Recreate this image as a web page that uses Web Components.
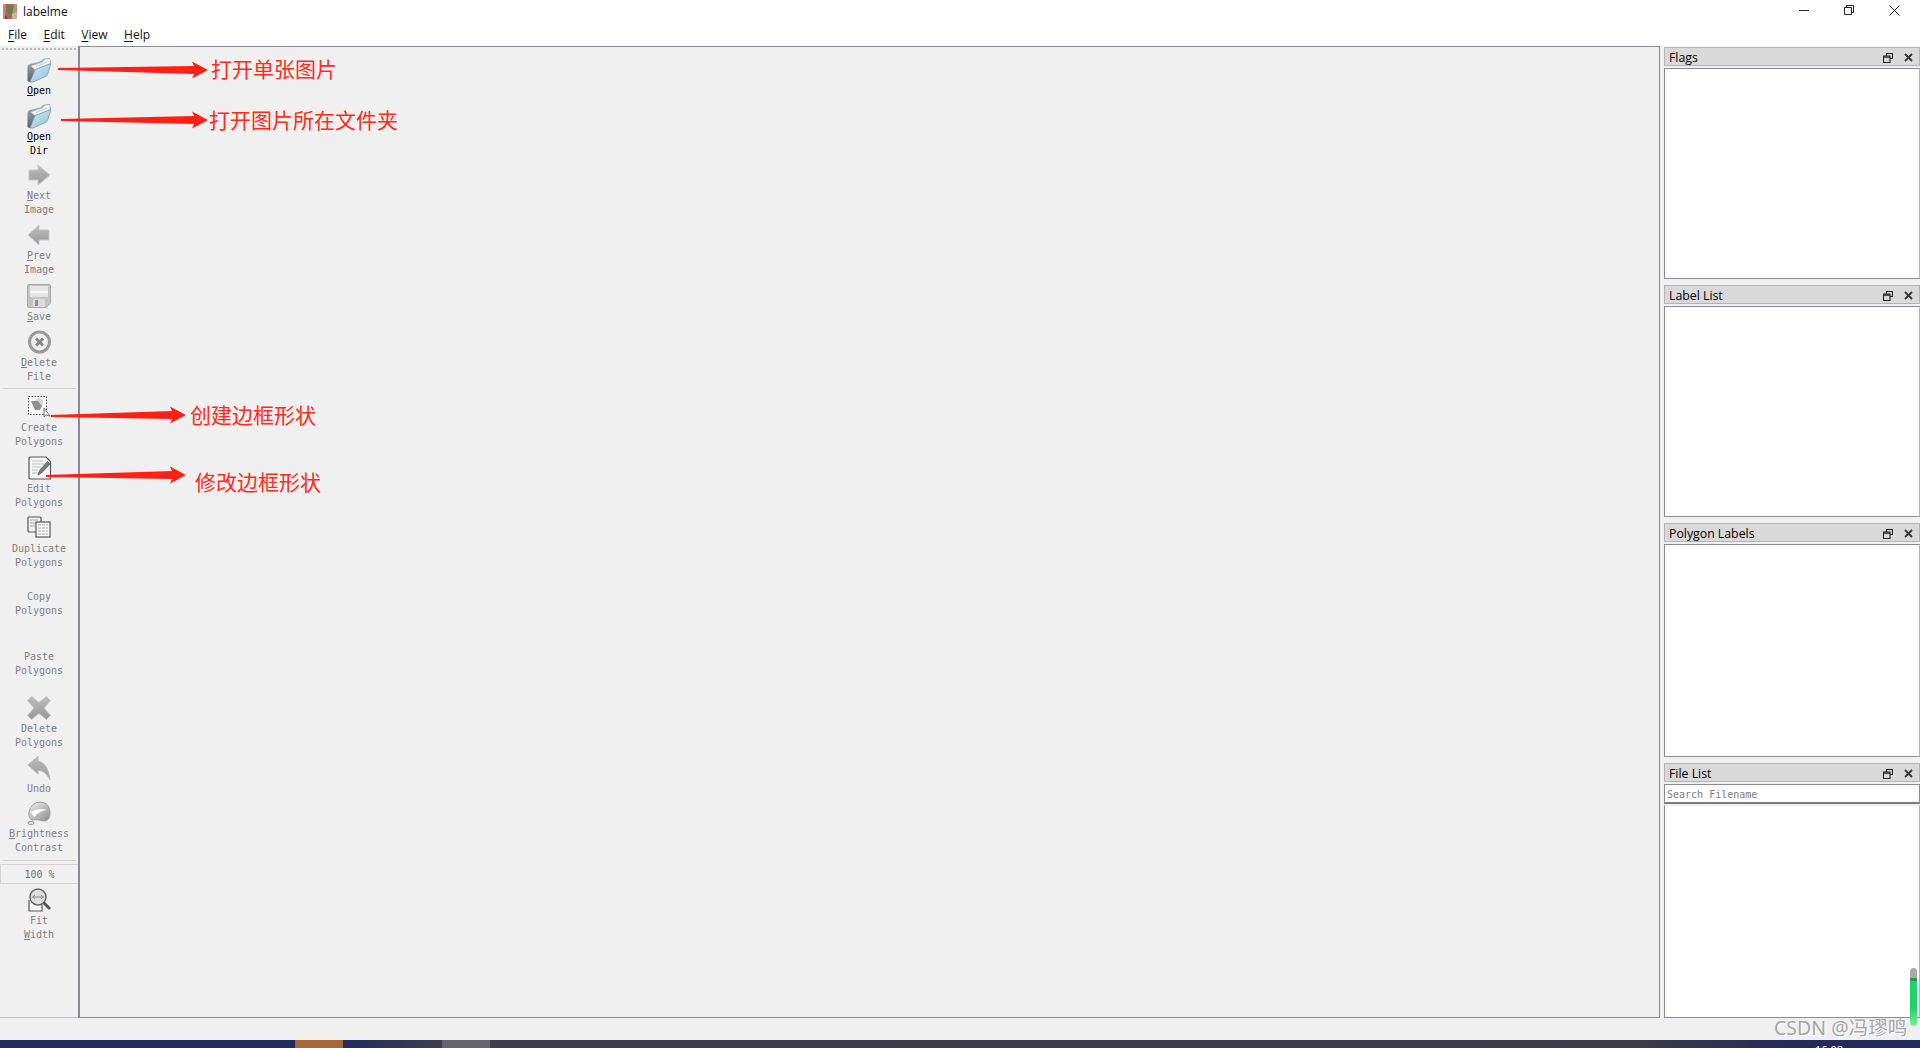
<!DOCTYPE html>
<html lang="zh">
<head>
<meta charset="utf-8">
<title>labelme</title>
<style>
  html, body { margin: 0; height: 100%; overflow: hidden; background: #f0f0f0; }
  body { font-family: "Open Sans", "Noto Sans", sans-serif; }
</style>
</head>
<body>
<app-window></app-window>

<script>
  (function labelmeApp(customElements) {
    // icons are all 24x24 boxes, the disabled ones are greys
    const defs = `
      <defs>
        <linearGradient id="pane" x1="0" y1="0" x2="1" y2="1"><stop offset="0" stop-color="#d6ebf4"/><stop offset="1" stop-color="#8dbfda"/></linearGradient>
        <linearGradient id="back" x1="0" y1="0" x2="0" y2="1"><stop offset="0" stop-color="#a9b4bc"/><stop offset="1" stop-color="#56626c"/></linearGradient>
        <linearGradient id="grey" x1="0" y1="0" x2="0" y2="1"><stop offset="0" stop-color="#bdbdbd"/><stop offset="1" stop-color="#979797"/></linearGradient>
        <linearGradient id="ball" x1="0" y1="0" x2="1" y2="1"><stop offset="0" stop-color="#f2f2f2"/><stop offset="1" stop-color="#8a8a8a"/></linearGradient>
      </defs>`;
    const icons = {
      folder: `<path d="M.5 23 .5 9Q.5 6.500 3 6L11 4 14 3 17 .5 23 0 24 5 21 9 7 24H2Z" fill="url(#back)"/><path d="M4 8 13 5 15.500 4 18 1.500 22.500 1 23 5.500 8 12Z" fill="#f1f4f5"/><path d="M8 6.500 15 4.500M9 8.500 20 4" stroke="#b9c6cf" stroke-width=".8"/><path d="M3 24 7.500 13Q8 11.500 9.500 11L24 5.500 20.500 16.500Q20 18 18.500 18.500L6 24Z" fill="url(#pane)" stroke="#7b9bb0" stroke-width=".8"/>`,
      next: `<path d="M2 7H11V2L23 12 11 22V17H2Z" fill="url(#grey)" stroke="#c9c9c9"/>`,
      prev: `<path d="M22 7H12V2L1 12 12 22V17H22Z" fill="url(#grey)" stroke="#c9c9c9"/>`,
      save: `<path d="M2 .5H22Q23.500 .5 23.500 2V19L19 23.500H2Q.5 23.500 .5 22V2Q.5 .5 2 .5Z" fill="#c4c4c4" stroke="#a8a8a8"/><rect x="3" y="2" width="18" height="11" fill="#e6e6e6"/><rect x="3" y="7" width="18" height="2" fill="#f8f8f8"/><rect x="6" y="15" width="12" height="8" fill="#dcdcdc"/><rect x="8" y="16" width="3" height="6" fill="#8f8f8f"/>`,
      deleteFile: `<circle cx="12.500" cy="12" r="10" fill="#eeeeee" stroke="#9a9a9a" stroke-width="3"/><path d="M9 8.500 16 15.500M16 8.500 9 15.500" stroke="#858585" stroke-width="3"/>`,
      create: `<rect x="1.500" y="3.500" width="18" height="18" fill="#fafafa" stroke="#444" stroke-dasharray="1.500 1.500"/><circle cx="12" cy="9.500" r="4" fill="#d5d5d5"/><path d="M4 8H11L15 13 13 17H8Z" fill="#8f8f8f"/><path d="M17 15V24L19 22 23 23Z" fill="#f5f5f5" stroke="#777"/>`,
      edit: `<path d="M3.500 3H19L23.500 7.500V25H3.500Q2 25 2 23.500V4.500Q2 3 3.500 3Z" fill="#f6f6f6" stroke="#555" stroke-width="1.200"/><path d="M5 7H16M5 10H19M5 13H14M5 16H11M5 19H12" stroke="#bdbdbd"/><path d="M11 21 12.500 16.500 20.500 7.500 23 10 15 18.500Z" fill="#7c7c7c" stroke="#444" stroke-width=".6"/>`,
      duplicate: `<rect x="1" y="2" width="13" height="15" rx="1" fill="#f0f0f0" stroke="#555" stroke-width="1.200"/><path d="M3 5H11M3 8H11M3 11H8" stroke="#aaa"/><rect x="9" y="7" width="14" height="15" fill="#fafafa" stroke="#555" stroke-width="1.200"/><path d="M11 10H21M11 13H21M11 16H21M11 19H21" stroke="#aaa" stroke-dasharray="3 1"/>`,
      cross: `<path d="M.5 4.500 4.500 .5 12 6.500 19.500 .5 23.500 4.500 17 12 23.500 19.500 19.500 23.500 12 17.500 4.500 23.500 .5 19.500 7 12Z" fill="url(#grey)" stroke="#c4c4c4" stroke-linejoin="round"/>`,
      undo: `<path d="M1 9 11 .5V5Q21 7 23 24 19 15 11 14V18Z" fill="url(#grey)" stroke="#b8b8b8"/>`,
      brightness: `<path d="M2 11Q4 1 14 1 23 2 23 12 23 20 17 20 10 18 5 19 1 17 2 11Z" fill="url(#ball)" stroke="#a2a2a2"/><path d="M4 11Q12 6 20 9 12 10 7 16Z" fill="#fff"/><ellipse cx="4" cy="22" rx="3" ry="1.700" fill="#ddd" stroke="#999"/>`,
      fit: `<path d="M2 12V23H15V17" fill="#f6f6f6" stroke="#555" stroke-width="1.200"/><circle cx="11" cy="9" r="8" fill="#dedede" stroke="#666" stroke-width="1.500"/><path d="M5.500 9H16.500M5.500 9 8 7M5.500 9 8 11M16.500 9 14 7M16.500 9 14 11" stroke="#8a8a8a" fill="none"/><path d="M16.500 14.500 23 21" stroke="#555" stroke-width="3"/>`
    };

    class ToolItem extends HTMLElement {
      constructor() {
        super();
        const name = this.getAttribute('icon');
        const art = name ? `<svg width="24" height="24" viewBox="0 0 24 24" overflow="visible">${defs}${icons[name]}</svg>` : '';
        this.attachShadow({mode: 'open'}).innerHTML = `
          <style>
            :host {
              display: flex;
              flex-direction: column;
              align-items: center;
              box-sizing: border-box;
              font: 10px/13.5px "DejaVu Sans Mono", monospace;
              color: #7f7f7f;
            }
            :host([on]) { color: #000; }
            .art { height: 24px; flex: none; margin-bottom: var(--gap, 2px); }
            .text { flex: none; white-space: pre; text-align: center; }
            u { text-underline-offset: 2px; }
          </style>
          <div class="art">${art}</div>
          <div class="text"><slot></slot></div>
        `;
      }
    }
    customElements.define('tool-item', ToolItem);

    class ToolBar extends HTMLElement {
      constructor() {
        super();
        this.attachShadow({mode: 'open'}).innerHTML = `
          <style>
            :host { display: block; width: 78px; flex: none; box-sizing: border-box; border-bottom: 1px solid #bdbdbd; }
            .grip { height: 12px; box-sizing: border-box; margin: 0 2px; padding-top: 2px; }
            .grip i { display: block; height: 2px; background: repeating-linear-gradient(90deg, #b9b9b9 0 2px, transparent 2px 4px); }
          </style>
          <div class="grip"><i></i></div>
          <slot></slot>
        `;
      }
    }
    customElements.define('tool-bar', ToolBar);

    class ToolSep extends HTMLElement {
      constructor() {
        super();
        this.attachShadow({mode: 'open'}).innerHTML = `
          <style>:host { display: block; height: 1px; margin: 0 2px 0 3px; background: #d2d2d2; }</style>
        `;
      }
    }
    customElements.define('tool-sep', ToolSep);

    class ZoomBox extends HTMLElement {
      constructor() {
        super();
        this.attachShadow({mode: 'open'}).innerHTML = `
          <style>
            :host {
              display: flex; align-items: center; justify-content: center;
              box-sizing: border-box; height: 20px;
              border: 1px solid #d4d4d4; border-right: 0;
              font: 10px "DejaVu Sans Mono", monospace; color: #6d6d6d;
            }
          </style>
          <slot></slot>
        `;
      }
    }
    customElements.define('zoom-box', ZoomBox);

    class DockPanel extends HTMLElement {
      constructor() {
        super();
        this.attachShadow({mode: 'open'}).innerHTML = `
          <style>
            :host { display: flex; flex-direction: column; box-sizing: border-box; }
            .title {
              display: flex; align-items: center; height: 19px; flex: none; box-sizing: border-box;
              padding: 2px 6px 0 4px; margin-bottom: 2px;
              background: #d9d9d9; border: 1px solid #b4b4b4;
              font-size: 12.300px; color: #000;
            }
            .name { flex: 1; }
            svg { display: block; }
            .body { flex: 1; display: flex; flex-direction: column; min-height: 0; }
          </style>
          <div class="title">
            <span class="name">${this.getAttribute('heading')}</span>
            <svg width="10" height="10" viewBox="0 0 10 10" style="margin-right:11px" fill="none" stroke="#222" stroke-width="1.100"><path d="M3.500 2.500V.5H9.500V5.500H7.500M.5 3H7V9.500H.5ZM.5 4.200H7"/></svg>
            <svg width="9" height="9" viewBox="0 0 9 9" stroke="#333" stroke-width="1.800"><path d="M1 1 8 8M8 1 1 8"/></svg>
          </div>
          <div class="body"><slot></slot></div>
        `;
      }
    }
    customElements.define('dock-panel', DockPanel);

    class DockBody extends HTMLElement {
      constructor() {
        super();
        this.attachShadow({mode: 'open'}).innerHTML = `
          <style>
            :host { display: block; flex: 1; box-sizing: border-box; background: #fff; border: 1px solid #8b8b95; border-right-color: #b5b5bb; }
            :host([soft]) { border-top-color: #e6ebef; }
          </style>
        `;
      }
    }
    customElements.define('dock-body', DockBody);

    class SearchBox extends HTMLElement {
      constructor() {
        super();
        this.attachShadow({mode: 'open'}).innerHTML = `
          <style>
            :host {
              display: flex; align-items: center; flex: none; box-sizing: border-box; height: 20px; padding: 2px 0 0 2px; margin-bottom: 1px;
              background: #fff; border: 1px solid #8b8b95; border-bottom: 2px solid #7a7a7a;
              font: 10px "DejaVu Sans Mono", monospace; color: #7d7d7d;
            }
          </style>
          <slot></slot>
        `;
      }
    }
    customElements.define('search-box', SearchBox);

    class WindowBar extends HTMLElement {
      constructor() {
        super();
        this.attachShadow({mode: 'open'}).innerHTML = `
          <style>
            :host { display: flex; align-items: center; height: 24px; flex: none; background: #fff; font-size: 12px; color: #111; padding-left: 3px; }
            .logo { margin-right: 6px; flex: none; margin-top: -2px; }
            .name { flex: 1; margin-top: -2px; }
            .ctl { display: flex; padding-right: 20px; gap: 35px; margin-top: -4px; }
            svg { display: block; }
          </style>
          <svg class="logo" width="14" height="15" viewBox="0 0 14 15">
            <rect width="14" height="15" fill="#a8615c"/>
            <path d="M0 0H3L2 15H0ZM10 0H14V6L11 15H9Z" fill="#c08e7c"/>
            <path d="M4 8 7 3 11 1 10 6 7 13 6 9Z" fill="#4c9136"/>
            <path d="M9 10 14 8V15H9Z" fill="#d3b19d"/>
            <path d="M2 11 5 15H2Z" fill="#7d3c3a"/>
          </svg>
          <span class="name">labelme</span>
          <div class="ctl">
            <svg width="10" height="10" viewBox="0 0 10 10" stroke="#222"><path d="M0 5.500H10"/></svg>
            <svg width="10" height="10" viewBox="0 0 10 10" fill="none" stroke="#222"><path d="M2.500 2.500V.5H9.500V7.500H7.500M.5 2.500H7.500V9.500H.5Z"/></svg>
            <svg width="11" height="11" viewBox="0 0 11 11" stroke="#222"><path d="M.5 .5 10.500 10.500M10.500 .5 .5 10.500"/></svg>
          </div>
        `;
      }
    }
    customElements.define('window-bar', WindowBar);

    class MenuBar extends HTMLElement {
      constructor() {
        super();
        this.attachShadow({mode: 'open'}).innerHTML = `
          <style>
            :host { display: flex; align-items: center; height: 22px; flex: none; gap: 16.500px; padding: 0 0 2px 8px; box-sizing: border-box; background: #fff; font-size: 12px; color: #111; }
            u { text-underline-offset: 2px; }
          </style>
          <span><u>F</u>ile</span><span><u>E</u>dit</span><span><u>V</u>iew</span><span><u>H</u>elp</span>
        `;
      }
    }
    customElements.define('menu-bar', MenuBar);

    // red notes drawn over the picture, their place is free so absolute is fine
    class NoteLayer extends HTMLElement {
      constructor() {
        super();
        const notes = [
          {text: '打开单张图片', x: 211, y: 68},
          {text: '打开图片所在文件夹', x: 209, y: 119},
          {text: '创建边框形状', x: 190, y: 414},
          {text: '修改边框形状', x: 195, y: 481}
        ];
        const arrow = (x0, y0, x1, y1) => {
          const bx = x1 - 16, n = 8.500;
          return `<path d="M${x0} ${y0 - 1}L${bx + 2} ${y1 - 4}L${bx} ${y1 - n}L${x1} ${y1}L${bx} ${y1 + n}L${bx + 2} ${y1 + 4}L${x0} ${y0 + 1}Z"/>`;
        };
        this.attachShadow({mode: 'open'}).innerHTML = `
          <style>
            :host { position: absolute; inset: 0; pointer-events: none; display: block; }
            svg { position: absolute; left: 0; top: 0; }
            span {
              position: absolute; transform: translateY(-50%);
              font: 21px/24px "Noto Sans CJK SC", sans-serif; color: #ff2a1a; white-space: nowrap;
            }
          </style>
          <svg width="420" height="520" fill="#ff2015">
            ${arrow(58, 69, 208, 70)}
            ${arrow(61, 120, 208, 120)}
            ${arrow(51, 416, 186, 415)}
            ${arrow(46, 476, 186, 475)}
          </svg>
          ${notes.map(n => `<span style="left:${n.x}px;top:${n.y}px">${n.text}</span>`).join('')}
        `;
      }
    }
    customElements.define('note-layer', NoteLayer);

    class WaterMark extends HTMLElement {
      constructor() {
        super();
        this.attachShadow({mode: 'open'}).innerHTML = `
          <style>
            :host { position: absolute; inset: 0; pointer-events: none; display: block; }
            .mark {
              position: absolute; left: 1774px; top: 1016px;
              font: 19.500px/24px "Noto Sans", "Noto Sans CJK SC", sans-serif; color: #a6a6a6;
              text-shadow: 1px 1px 0 #fff; white-space: nowrap;
            }
            .meter {
              position: absolute; left: 1910px; top: 968px; width: 7px; height: 58px; border-radius: 4px;
              background: linear-gradient(#a9a9a9 0 10px, #1f9a55 10px 13px, #22d06c 13px, #22d06c 70%, #7cef9c);
            }
          </style>
          <div class="meter"></div>
          <div class="mark">CSDN @冯璆鸣</div>
        `;
      }
    }
    customElements.define('water-mark', WaterMark);

    class TaskStrip extends HTMLElement {
      constructor() {
        super();
        this.attachShadow({mode: 'open'}).innerHTML = `
          <style>
            :host {
              display: block; position: relative; height: 8px; flex: none; overflow: hidden;
              background: linear-gradient(90deg, #232a5c 0 343px, #3c3e4e 442px, #3a3c48 1640px, #252a58 1790px, #232a5c);
            }
            .btn { position: absolute; top: 0; bottom: 0; width: 48px; }
            .time { position: absolute; left: 1815px; top: 3px; font-size: 11px; line-height: 14px; color: #fff; }
          </style>
          <div class="btn" style="left:295px;background:#a8663c"></div>
          <div class="btn" style="left:442px;background:#62636c"></div>
          <div class="time">16:08</div>
        `;
      }
    }
    customElements.define('task-strip', TaskStrip);

    class AppWindow extends HTMLElement {
      constructor() {
        super();
        this.attachShadow({mode: 'open'}).innerHTML = `
          <style>
            :host { display: flex; flex-direction: column; position: relative; height: 1048px; width: 1920px; overflow: hidden; background: #f0f0f0; }
            .main { display: flex; flex: none; height: 972px; }
            .canvas { width: 1582px; flex: none; box-sizing: border-box; background: #f0f0f0; border: solid #8b8b95; border-width: 1px 1px 1px 2px; }
            .docks { width: 256px; margin-left: 4px; padding-top: 1px; display: flex; flex-direction: column; }
            .status { flex: 1; }
            dock-panel { height: 238px; flex: none; }
            dock-panel.tall { height: 240px; }
            dock-panel.last { height: 255px; }
            dock-panel > dock-body { margin-bottom: 6px; }
            dock-panel.last > dock-body { margin-bottom: 0; }
          </style>
          <window-bar></window-bar>
          <menu-bar></menu-bar>
          <div class="main">
            <tool-bar>
              <tool-item on icon="folder" style="height:46px"><u>O</u>pen</tool-item>
              <tool-item on icon="folder" style="height:59px"><u>O</u>pen
Dir</tool-item>
              <tool-item icon="next" style="height:60px"><u>N</u>ext
Image</tool-item>
              <tool-item icon="prev" style="height:61px"><u>P</u>rev
Image</tool-item>
              <tool-item icon="save" style="height:46px"><u>S</u>ave</tool-item>
              <tool-item icon="deleteFile" style="height:58px"><u>D</u>elete
File</tool-item>
              <tool-sep></tool-sep>
              <tool-item icon="create" style="height:61px;margin-top:4px;--gap:4px">Create
Polygons</tool-item>
              <tool-item icon="edit" style="height:61px;--gap:4px">Edit
Polygons</tool-item>
              <tool-item icon="duplicate" style="height:49px;--gap:3px">Duplicate
Polygons</tool-item>
              <tool-item style="height:60px">Copy
Polygons</tool-item>
              <tool-item style="height:72px">Paste
Polygons</tool-item>
              <tool-item icon="cross" style="height:60px">Delete
Polygons</tool-item>
              <tool-item icon="undo" style="height:45px">Undo</tool-item>
              <tool-item icon="brightness" style="height:59px"><u>B</u>rightness
Contrast</tool-item>
              <tool-sep></tool-sep>
              <zoom-box style="margin:3px 0 4px">100 %</zoom-box>
              <tool-item icon="fit" style="height:60px">Fit
<u>W</u>idth</tool-item>
            </tool-bar>
            <div class="canvas"></div>
            <div class="docks">
              <dock-panel heading="Flags"><dock-body></dock-body></dock-panel>
              <dock-panel heading="Label List"><dock-body></dock-body></dock-panel>
              <dock-panel class="tall" heading="Polygon Labels"><dock-body></dock-body></dock-panel>
              <dock-panel class="last" heading="File List">
                <search-box>Search Filename</search-box>
                <dock-body soft></dock-body>
              </dock-panel>
            </div>
          </div>
          <div class="status"></div>
          <task-strip></task-strip>
          <note-layer></note-layer>
          <water-mark></water-mark>
        `;
      }
    }
    customElements.define('app-window', AppWindow);
  })(window.customElements);
</script>
</body>
</html>
